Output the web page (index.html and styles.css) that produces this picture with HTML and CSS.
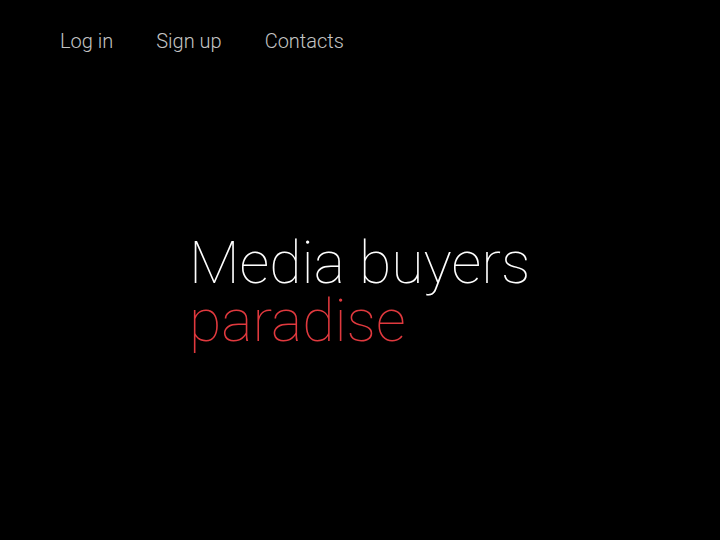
FILE: index.html
```html
<!DOCTYPE html>
<html>
<head>
<meta charset="utf-8">
<link rel="stylesheet" href="styles.css">
</head>
<body>
<nav class="nav">
  <a class="nav-link" href="#">Log in</a>
  <a class="nav-link" href="#">Sign up</a>
  <a class="nav-link" href="#">Contacts</a>
</nav>
<main class="hero">
  <h1 class="title">
    <span class="line">Media buyers</span>
    <span class="line accent">paradise</span>
  </h1>
</main>
</body>
</html>
```

FILE: styles.css
```css
html, body {
  margin: 0;
  padding: 0;
  background: #000;
  width: 720px;
  height: 540px;
  overflow: hidden;
  font-family: Roboto, "Liberation Sans", sans-serif;
}
.nav {
  display: flex;
  gap: 43px;
  padding: 28px 0 0 60px;
}
.nav-link {
  color: #c4c4c4;
  text-decoration: none;
  font-size: 20px;
  font-weight: 300;
  line-height: 26px;
}
.hero {
  padding: 180px 0 0 189px;
}
.title {
  margin: 0;
  font-weight: 100;
  font-size: 59px;
  line-height: 58px;
  color: #fff;
}
.line {
  display: block;
}
.accent {
  color: #e0393e;
}
```
